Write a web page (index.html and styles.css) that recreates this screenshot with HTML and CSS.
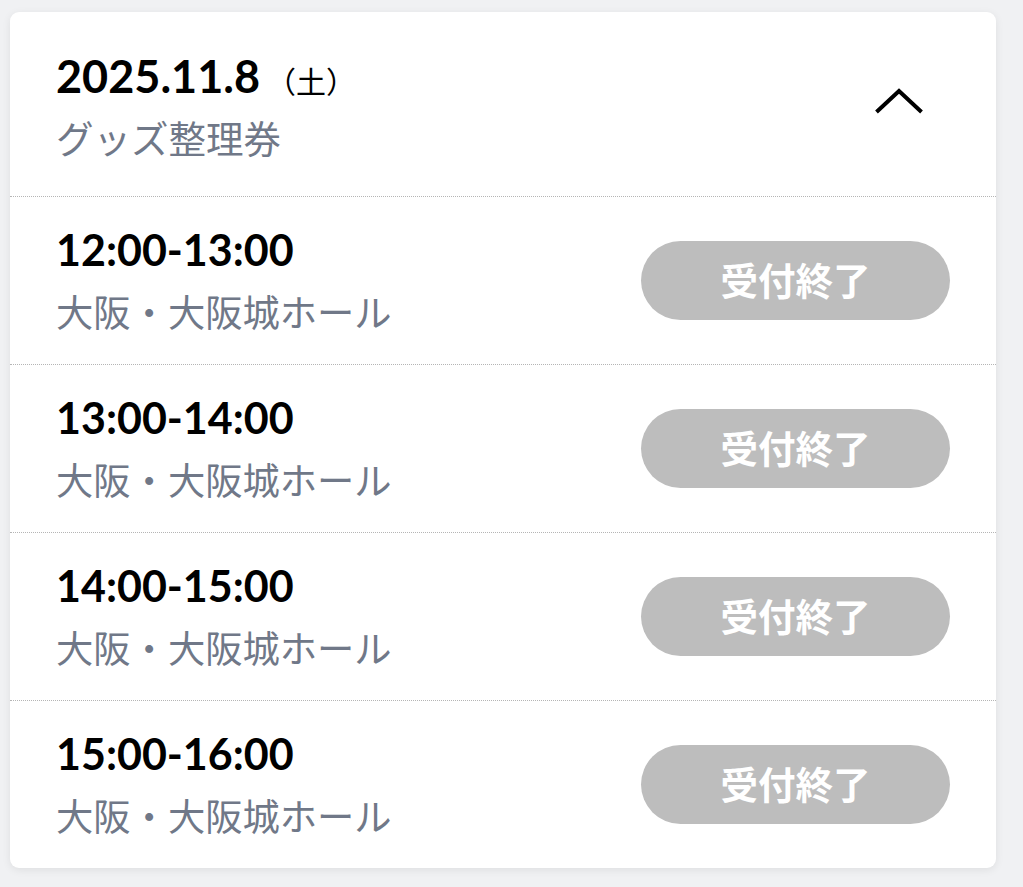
FILE: index.html
```html
<!DOCTYPE html>
<html lang="ja">
<head>
<meta charset="utf-8">
<title>グッズ整理券</title>
<link rel="stylesheet" href="styles.css">
</head>
<body>
<section class="card">
  <header class="card-head">
    <div class="head-text">
      <div class="date">2025.11.8<span class="dow">（土）</span></div>
      <div class="sub">グッズ整理券</div>
    </div>
    <svg class="chevron" width="48" height="26" viewBox="0 -3 48 26" aria-hidden="true">
      <polyline points="1.5,21 24,0 46.5,21" fill="none" stroke="#000" stroke-width="4" stroke-linejoin="miter"/>
    </svg>
  </header>
  <div class="row">
    <div class="row-text">
      <div class="time">12:00-13:00</div>
      <div class="place">大阪・大阪城ホール</div>
    </div>
    <span class="btn">受付終了</span>
  </div>
  <div class="row">
    <div class="row-text">
      <div class="time">13:00-14:00</div>
      <div class="place">大阪・大阪城ホール</div>
    </div>
    <span class="btn">受付終了</span>
  </div>
  <div class="row">
    <div class="row-text">
      <div class="time">14:00-15:00</div>
      <div class="place">大阪・大阪城ホール</div>
    </div>
    <span class="btn">受付終了</span>
  </div>
  <div class="row">
    <div class="row-text">
      <div class="time">15:00-16:00</div>
      <div class="place">大阪・大阪城ホール</div>
    </div>
    <span class="btn">受付終了</span>
  </div>
</section>
</body>
</html>
```
FILE: styles.css
```css
html, body {
  margin: 0;
  padding: 0;
  background: #f0f1f3;
}
body {
  font-family: Lato, "Noto Sans CJK JP", sans-serif;
  color: #000;
  padding: 12px 27px 19px 10px;
}
.card {
  background: #fff;
  border-radius: 9px;
  box-shadow: 0 2px 8px rgba(0, 0, 0, 0.08);
  overflow: hidden;
}
.card-head {
  height: 184px;
  box-sizing: border-box;
  padding: 0 73px 0 46px;
  display: flex;
  align-items: center;
  justify-content: space-between;
}
.head-text {
  margin-top: 4px;
}
.date {
  font-size: 45px;
  font-weight: 700;
  line-height: 54px;
}
.dow {
  font-family: "Noto Sans CJK JP", sans-serif;
  font-weight: 400;
  font-size: 30px;
  line-height: 1;
  margin-left: 6px;
}
.sub {
  font-family: "Noto Sans CJK JP", sans-serif;
  font-size: 37.5px;
  line-height: 52px;
  color: #707888;
  margin-top: 8px;
}
.chevron {
  display: block;
  overflow: visible;
  margin-bottom: 6px;
}
.row {
  height: 168px;
  box-sizing: border-box;
  border-top: 1px dotted #b5b5b5;
  padding: 0 46px;
  display: flex;
  align-items: center;
  justify-content: space-between;
}
.row-text {
  margin-top: 1px;
}
.time {
  font-size: 43px;
  font-weight: 700;
  line-height: 48px;
}
.place {
  font-family: "Noto Sans CJK JP", sans-serif;
  font-size: 37.3px;
  line-height: 52px;
  color: #707888;
  margin-top: 11px;
}
.btn {
  width: 309px;
  height: 79px;
  box-sizing: border-box;
  padding-bottom: 5px;
  border-radius: 40px;
  background: #bdbdbd;
  color: #fff;
  font-family: "Noto Sans CJK JP", sans-serif;
  font-weight: 700;
  font-size: 37.5px;
  display: flex;
  align-items: center;
  justify-content: center;
}
```
